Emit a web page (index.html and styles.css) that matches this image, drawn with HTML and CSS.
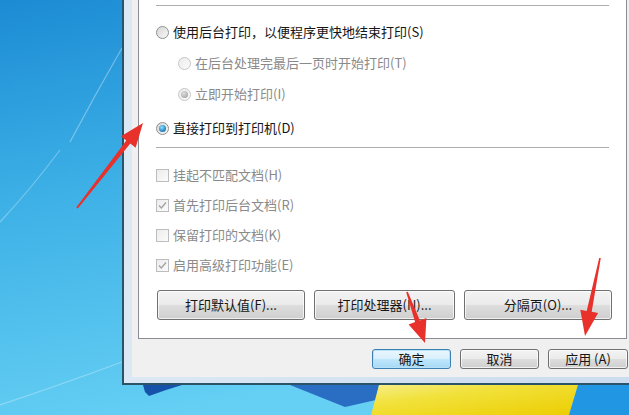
FILE: index.html
```html
<!DOCTYPE html>
<html lang="zh-CN">
<head>
    <meta charset="UTF-8">
    <title>打印机属性 - 高级</title>
    <link rel="stylesheet" href="styles.css">
</head>
<body>
    <div class="desktop">
        <svg class="wallpaper" width="629" height="415" viewBox="0 0 629 415">
            <defs>
                <linearGradient id="sky" x1="0" y1="0" x2="0.3" y2="1">
                    <stop offset="0" stop-color="#1c8bd4"/>
                    <stop offset="0.45" stop-color="#3db0e6"/>
                    <stop offset="1" stop-color="#66d0f4"/>
                </linearGradient>
                <linearGradient id="flag" x1="0" y1="0" x2="1" y2="1">
                    <stop offset="0" stop-color="#f6ee86"/>
                    <stop offset="0.35" stop-color="#f1e13a"/>
                    <stop offset="1" stop-color="#eccd00"/>
                </linearGradient>
            </defs>
            <rect width="629" height="415" fill="url(#sky)"/>
            <path d="M70 142 Q95 95 122 48" stroke="#ffffff" stroke-opacity="0.35" stroke-width="1.2" fill="none"/>
            <path d="M0 222 Q30 190 60 150" stroke="#ffffff" stroke-opacity="0.3" stroke-width="1.2" fill="none"/>
            <path d="M0 405 Q60 385 122 362" stroke="#ffffff" stroke-opacity="0.3" stroke-width="1.2" fill="none"/>
            <polygon points="143,385 182,385 166,390 149,396 145,392" fill="#1553aa"/>
            <polygon points="290,385 379,385 376,400 345,407" fill="#2a6ec4"/>
            <polygon points="379,385 578,385 569,415 371,415" fill="url(#flag)"/>
            <polygon points="578,385 629,385 629,415 569,415" fill="#2197e4"/>
        </svg>

        <div class="window">
            <div class="client">
                <div class="panel">
                    <div class="sep"></div>

                    <div class="row row-first">
                        <span class="radio"></span>
                        <span>使用后台打印，以便程序更快地结束打印(S)</span>
                    </div>
                    <div class="row row-sub is-disabled">
                        <span class="radio"></span>
                        <span>在后台处理完最后一页时开始打印(T)</span>
                    </div>
                    <div class="row row-sub is-disabled">
                        <span class="radio is-checked"></span>
                        <span>立即开始打印(I)</span>
                    </div>
                    <div class="row row-direct">
                        <span class="radio is-checked"></span>
                        <span>直接打印到打印机(D)</span>
                    </div>

                    <div class="sep sep-second"></div>

                    <div class="row row-check is-disabled">
                        <span class="check"></span>
                        <span>挂起不匹配文档(H)</span>
                    </div>
                    <div class="row row-check is-disabled">
                        <span class="check"><svg width="11" height="11" viewBox="0 0 11 11"><path d="M2 5.5 L4.3 8 L9 2.5" stroke="#a4a4a4" stroke-width="1.4" fill="none"/></svg></span>
                        <span>首先打印后台文档(R)</span>
                    </div>
                    <div class="row row-check is-disabled">
                        <span class="check"></span>
                        <span>保留打印的文档(K)</span>
                    </div>
                    <div class="row row-check is-disabled">
                        <span class="check"><svg width="11" height="11" viewBox="0 0 11 11"><path d="M2 5.5 L4.3 8 L9 2.5" stroke="#a4a4a4" stroke-width="1.4" fill="none"/></svg></span>
                        <span>启用高级打印功能(E)</span>
                    </div>

                    <div class="panel-buttons">
                        <button class="btn btn-tall">打印默认值(F)...</button>
                        <button class="btn btn-tall">打印处理器(N)...</button>
                        <button class="btn btn-tall">分隔页(O)...</button>
                    </div>
                </div>

                <div class="footer">
                    <button class="btn btn-default">确定</button>
                    <button class="btn">取消</button>
                    <button class="btn btn-apply">应用 (A)</button>
                </div>
            </div>
        </div>

        <svg class="arrows" width="629" height="415" viewBox="0 0 629 415">
            <polygon points="77.8,208.6 130.3,143.5 135.6,147.7 143,123 121.0,136.3 126.3,140.5 76.2,207.4" fill="#e8312b"/>
            <polygon points="407.8,291.7 419.9,320.5 426.4,318.1 425,343 408.6,324.5 415.1,322.1 406.2,292.3" fill="#e8312b"/>
            <polygon points="600.8,258.1 591.7,311.8 598.1,313.0 585,336 580.3,309.8 586.7,311.0 599.2,257.9" fill="#e8312b"/>
        </svg>
    </div>
</body>
</html>
```

FILE: styles.css
```css
* {
    box-sizing: border-box;
}
body {
    margin: 0;
    font-family: "Noto Sans CJK SC", "Microsoft YaHei", sans-serif;
    font-size: 13px;
    color: #151515;
}
.desktop {
    position: relative;
    width: 629px;
    height: 415px;
    overflow: hidden;
}
.wallpaper {
    position: absolute;
    left: 0;
    top: 0;
}
.window {
    position: absolute;
    left: 122px;
    top: -40px;
    width: 560px;
    height: 425px;
    border-left: 2px solid #2b5468;
    border-bottom: 2px solid #2b5468;
    background: linear-gradient(to right, #dce8f4, #c9dbee);
    padding: 0 0 6px 8px;
}
.client {
    height: 100%;
    background-color: #f0f0f0;
    padding: 10px 0 0 6px;
    display: flex;
    flex-direction: column;
}
.panel {
    width: 489px;
    background-color: #fff;
    border: 1px solid #898c95;
    padding: 34px 17px 18px 17px;
    display: flex;
    flex-direction: column;
}
.sep {
    height: 1px;
    background-color: #adadad;
}
.sep-second {
    margin-top: 9px;
}
.row {
    display: flex;
    align-items: center;
    gap: 4px;
    height: 20px;
    line-height: 20px;
    white-space: nowrap;
}
.row-first {
    margin-top: 16px;
}
.row-sub {
    margin-top: 11px;
    padding-left: 22px;
}
.row-direct {
    margin-top: 14px;
}
.row-check {
    margin-top: 10px;
}
.sep-second + .row-check {
    margin-top: 17px;
}
.is-disabled {
    color: #8a8a8a;
}
.radio {
    flex: none;
    width: 13px;
    height: 13px;
    border-radius: 50%;
    border: 1px solid #8e8f8f;
    background: linear-gradient(135deg, #d6d6d6, #f8f8f8);
    display: flex;
    align-items: center;
    justify-content: center;
}
.is-disabled .radio {
    border-color: #c6c6c6;
    background: linear-gradient(135deg, #ececec, #fafafa);
}
.radio.is-checked::after {
    content: "";
    width: 7px;
    height: 7px;
    border-radius: 50%;
    background: radial-gradient(circle at 40% 35%, #9fe0fb 0, #3a9fd8 45%, #1a4f80 100%);
}
.is-disabled .radio.is-checked::after {
    background: radial-gradient(circle at 40% 35%, #e0e0e0 0, #b3b3b3 60%, #9a9a9a 100%);
}
.check {
    flex: none;
    width: 13px;
    height: 13px;
    border: 1px solid #bdbdbd;
    background: linear-gradient(135deg, #ececec, #fbfbfb);
    display: flex;
    align-items: center;
    justify-content: center;
}
.panel-buttons {
    margin-top: 15px;
    padding-left: 1px;
    display: grid;
    grid-template-columns: 148px 141px 148px;
    column-gap: 9px;
}
.btn {
    font-family: inherit;
    font-size: 13px;
    color: #151515;
    height: 20px;
    width: 79px;
    padding: 0;
    line-height: 18px;
    border: 1px solid #707070;
    border-radius: 3px;
    background: linear-gradient(#f3f3f3 0%, #ebebeb 48%, #dddddd 52%, #cfcfcf 100%);
    box-shadow: inset 0 0 0 1px rgba(255, 255, 255, 0.7);
}
.btn-tall {
    width: auto;
    height: 30px;
    line-height: 28px;
}
.footer {
    margin-top: 10px;
    padding-left: 234px;
    display: flex;
    gap: 9px;
}
.btn-default {
    border-color: #3c7fb1;
    background: linear-gradient(#eaf6fd 0%, #d9f0fc 48%, #bee6fd 52%, #a7d9f5 100%);
    box-shadow: inset 0 0 0 1px #b8e2f8;
}
.btn-apply {
    width: 80px;
}
.arrows {
    position: absolute;
    left: 0;
    top: 0;
}
```
